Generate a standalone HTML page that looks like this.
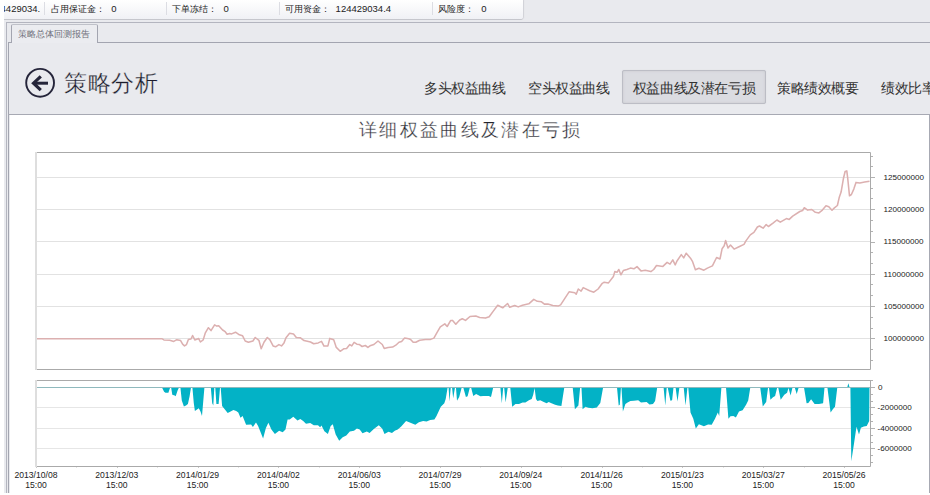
<!DOCTYPE html>
<html><head><meta charset="utf-8">
<style>
html,body{margin:0;padding:0;}
body{width:930px;height:495px;position:relative;overflow:hidden;background:#e9eaee;font-family:"Liberation Sans",sans-serif;}
.a{position:absolute;white-space:nowrap;}
.sb{font-size:9px;color:#222;top:3px;line-height:12px;}
.sbn{font-size:9.5px;color:#222;top:2.5px;line-height:12px;}
.sep{position:absolute;top:2px;width:1px;height:13px;background:#dcdde3;}
.nav{font-size:14px;color:#333;top:80px;line-height:17px;letter-spacing:-0.4px}
</style></head><body>
<div class="a" style="left:0;top:0;width:523px;height:19px;background:linear-gradient(#ffffff,#f0f1f5);box-shadow:0 1px 0 #c6c7cd, 1px 0 1px #d0d1d6;border-radius:0 0 2px 0"></div>
<div class="a sbn" style="left:-10px">124429034.</div>
<div class="sep" style="left:44px"></div>
<div class="a sb" style="left:50.6px">占用保证金：</div><div class="a sbn" style="left:111.3px">0</div>
<div class="sep" style="left:166px"></div>
<div class="a sb" style="left:172px">下单冻结：</div><div class="a sbn" style="left:223.6px">0</div>
<div class="sep" style="left:279px"></div>
<div class="a sb" style="left:284.5px">可用资金：</div><div class="a sbn" style="left:335.6px">124429034.4</div>
<div class="sep" style="left:432px"></div>
<div class="a sb" style="left:437.7px">风险度：</div><div class="a sbn" style="left:481.2px">0</div>
<div class="a" style="left:0;top:0;width:4px;height:495px;background:#fff"></div>
<!-- tab control -->
<div class="a" style="left:6px;top:22px;width:924px;height:1px;background:#b3b5bf"></div>
<div class="a" style="left:6px;top:22px;width:1px;height:471px;background:#b3b5bf"></div>
<div class="a" style="left:11px;top:24px;width:85px;height:18px;border:1px solid #a3a5b0;border-top-color:#bfc1c9;border-bottom:none;border-radius:2px 2px 0 0;background:#ebecf0"></div>
<div class="a" style="left:18px;top:28px;font-size:9px;color:#6e6f7a;line-height:12px">策略总体回测报告</div>
<div class="a" style="left:8px;top:42px;width:3px;height:1px;background:#a3a5b0"></div>
<div class="a" style="left:97px;top:42px;width:833px;height:1px;background:#a3a5b0"></div>
<div class="a" style="left:8px;top:42px;width:1px;height:451px;background:#a3a5b0"></div>
<!-- header -->
<svg class="a" style="left:0;top:0" width="930" height="495" viewBox="0 0 930 495">
<circle cx="40.1" cy="82.8" r="13.9" fill="none" stroke="#25253a" stroke-width="1.9"/>
<path d="M48,83.2 H34" fill="none" stroke="#25253a" stroke-width="3"/><path d="M40.8,76.3 L33.5,83.2 L40.8,90.1" fill="none" stroke="#25253a" stroke-width="3.2" stroke-linecap="butt" stroke-linejoin="miter" stroke-miterlimit="10"/>
</svg>
<div class="a" style="left:64px;top:69px;font-size:23.4px;color:#1c1c2c;line-height:28px;letter-spacing:0.65px;-webkit-text-stroke:0.3px #e9eaee">策略分析</div>
<div class="a nav" style="left:424px">多头权益曲线</div>
<div class="a nav" style="left:528px">空头权益曲线</div>
<div class="a" style="left:622px;top:69.5px;width:142px;height:32.5px;border:1px solid #bcbdc5;border-radius:2px;background:#dbdce1;box-shadow:inset 0 0 3px #c9cacf, 0 0 1px #d0d1d6"></div>
<div class="a nav" style="left:632.8px">权益曲线及潜在亏损</div>
<div class="a nav" style="left:777px">策略绩效概要</div>
<div class="a nav" style="left:881px">绩效比率</div>
<svg class="a" style="left:0;top:0" width="930" height="495" viewBox="0 0 930 495">
<rect x="10" y="115" width="919" height="378" fill="#fff"/>
<line x1="8" y1="114.5" x2="930" y2="114.5" stroke="#a7a9b3" stroke-width="1"/>
<line x1="929.5" y1="114" x2="929.5" y2="493" stroke="#a7a9b3" stroke-width="1"/>
<line x1="36" y1="177.5" x2="870" y2="177.5" stroke="#e2e2e2" stroke-width="1"/>
<line x1="36" y1="209.5" x2="870" y2="209.5" stroke="#e2e2e2" stroke-width="1"/>
<line x1="36" y1="241.5" x2="870" y2="241.5" stroke="#e2e2e2" stroke-width="1"/>
<line x1="36" y1="274.5" x2="870" y2="274.5" stroke="#e2e2e2" stroke-width="1"/>
<line x1="36" y1="306.5" x2="870" y2="306.5" stroke="#e2e2e2" stroke-width="1"/>
<line x1="36" y1="338.5" x2="870" y2="338.5" stroke="#e2e2e2" stroke-width="1"/>
<line x1="36" y1="407.5" x2="870" y2="407.5" stroke="#e6e6e6" stroke-width="1"/>
<line x1="36" y1="428.5" x2="870" y2="428.5" stroke="#e6e6e6" stroke-width="1"/>
<line x1="36" y1="448.5" x2="870" y2="448.5" stroke="#e6e6e6" stroke-width="1"/>
<line x1="870" y1="156.5" x2="873" y2="156.5" stroke="#b2b2b2" stroke-width="1"/>
<line x1="870" y1="166.5" x2="873" y2="166.5" stroke="#b2b2b2" stroke-width="1"/>
<line x1="870" y1="177.5" x2="875" y2="177.5" stroke="#b2b2b2" stroke-width="1"/>
<line x1="870" y1="188.5" x2="873" y2="188.5" stroke="#b2b2b2" stroke-width="1"/>
<line x1="870" y1="198.5" x2="873" y2="198.5" stroke="#b2b2b2" stroke-width="1"/>
<line x1="870" y1="209.5" x2="875" y2="209.5" stroke="#b2b2b2" stroke-width="1"/>
<line x1="870" y1="220.5" x2="873" y2="220.5" stroke="#b2b2b2" stroke-width="1"/>
<line x1="870" y1="231.5" x2="873" y2="231.5" stroke="#b2b2b2" stroke-width="1"/>
<line x1="870" y1="242.5" x2="875" y2="242.5" stroke="#b2b2b2" stroke-width="1"/>
<line x1="870" y1="252.5" x2="873" y2="252.5" stroke="#b2b2b2" stroke-width="1"/>
<line x1="870" y1="263.5" x2="873" y2="263.5" stroke="#b2b2b2" stroke-width="1"/>
<line x1="870" y1="274.5" x2="875" y2="274.5" stroke="#b2b2b2" stroke-width="1"/>
<line x1="870" y1="284.5" x2="873" y2="284.5" stroke="#b2b2b2" stroke-width="1"/>
<line x1="870" y1="295.5" x2="873" y2="295.5" stroke="#b2b2b2" stroke-width="1"/>
<line x1="870" y1="306.5" x2="875" y2="306.5" stroke="#b2b2b2" stroke-width="1"/>
<line x1="870" y1="317.5" x2="873" y2="317.5" stroke="#b2b2b2" stroke-width="1"/>
<line x1="870" y1="328.5" x2="873" y2="328.5" stroke="#b2b2b2" stroke-width="1"/>
<line x1="870" y1="338.5" x2="875" y2="338.5" stroke="#b2b2b2" stroke-width="1"/>
<line x1="870" y1="349.5" x2="873" y2="349.5" stroke="#b2b2b2" stroke-width="1"/>
<line x1="870" y1="360.5" x2="873" y2="360.5" stroke="#b2b2b2" stroke-width="1"/>
<line x1="870" y1="380.5" x2="873" y2="380.5" stroke="#b2b2b2" stroke-width="1"/>
<line x1="870" y1="387.5" x2="875" y2="387.5" stroke="#b2b2b2" stroke-width="1"/>
<line x1="870" y1="394.5" x2="873" y2="394.5" stroke="#b2b2b2" stroke-width="1"/>
<line x1="870" y1="401.5" x2="873" y2="401.5" stroke="#b2b2b2" stroke-width="1"/>
<line x1="870" y1="407.5" x2="875" y2="407.5" stroke="#b2b2b2" stroke-width="1"/>
<line x1="870" y1="414.5" x2="873" y2="414.5" stroke="#b2b2b2" stroke-width="1"/>
<line x1="870" y1="421.5" x2="873" y2="421.5" stroke="#b2b2b2" stroke-width="1"/>
<line x1="870" y1="428.5" x2="875" y2="428.5" stroke="#b2b2b2" stroke-width="1"/>
<line x1="870" y1="435.5" x2="873" y2="435.5" stroke="#b2b2b2" stroke-width="1"/>
<line x1="870" y1="442.5" x2="873" y2="442.5" stroke="#b2b2b2" stroke-width="1"/>
<line x1="870" y1="448.5" x2="875" y2="448.5" stroke="#b2b2b2" stroke-width="1"/>
<line x1="870" y1="455.5" x2="873" y2="455.5" stroke="#b2b2b2" stroke-width="1"/>
<line x1="870" y1="462.5" x2="873" y2="462.5" stroke="#b2b2b2" stroke-width="1"/>
<line x1="36.5" y1="466" x2="36.5" y2="468" stroke="#c8c8c8" stroke-width="1"/>
<line x1="76.5" y1="466" x2="76.5" y2="467.5" stroke="#c8c8c8" stroke-width="1"/>
<line x1="117.5" y1="466" x2="117.5" y2="468" stroke="#c8c8c8" stroke-width="1"/>
<line x1="157.5" y1="466" x2="157.5" y2="467.5" stroke="#c8c8c8" stroke-width="1"/>
<line x1="198.5" y1="466" x2="198.5" y2="468" stroke="#c8c8c8" stroke-width="1"/>
<line x1="238.5" y1="466" x2="238.5" y2="467.5" stroke="#c8c8c8" stroke-width="1"/>
<line x1="278.5" y1="466" x2="278.5" y2="468" stroke="#c8c8c8" stroke-width="1"/>
<line x1="319.5" y1="466" x2="319.5" y2="467.5" stroke="#c8c8c8" stroke-width="1"/>
<line x1="359.5" y1="466" x2="359.5" y2="468" stroke="#c8c8c8" stroke-width="1"/>
<line x1="400.5" y1="466" x2="400.5" y2="467.5" stroke="#c8c8c8" stroke-width="1"/>
<line x1="440.5" y1="466" x2="440.5" y2="468" stroke="#c8c8c8" stroke-width="1"/>
<line x1="480.5" y1="466" x2="480.5" y2="467.5" stroke="#c8c8c8" stroke-width="1"/>
<line x1="521.5" y1="466" x2="521.5" y2="468" stroke="#c8c8c8" stroke-width="1"/>
<line x1="561.5" y1="466" x2="561.5" y2="467.5" stroke="#c8c8c8" stroke-width="1"/>
<line x1="602.5" y1="466" x2="602.5" y2="468" stroke="#c8c8c8" stroke-width="1"/>
<line x1="642.5" y1="466" x2="642.5" y2="467.5" stroke="#c8c8c8" stroke-width="1"/>
<line x1="682.5" y1="466" x2="682.5" y2="468" stroke="#c8c8c8" stroke-width="1"/>
<line x1="723.5" y1="466" x2="723.5" y2="467.5" stroke="#c8c8c8" stroke-width="1"/>
<line x1="763.5" y1="466" x2="763.5" y2="468" stroke="#c8c8c8" stroke-width="1"/>
<line x1="804.5" y1="466" x2="804.5" y2="467.5" stroke="#c8c8c8" stroke-width="1"/>
<line x1="844.5" y1="466" x2="844.5" y2="468" stroke="#c8c8c8" stroke-width="1"/>
<path d="M36,387.4 L162.0,387.4 L164.1,391.7 L165.5,392.7 L168.4,392.7 L169.8,388.4 L170.5,387.4 L171.2,388.0 L172.3,394.8 L174.7,395.5 L175.7,396.2 L177.6,390.5 L179.0,387.4 L180.4,387.4 L181.8,400.4 L183.9,406.4 L186.0,405.4 L187.9,404.0 L189.6,396.2 L191.0,387.4 L192.4,387.4 L193.8,403.3 L194.9,411.0 L198.8,408.2 L200.6,411.7 L202.0,416.0 L204.4,387.7 L205.1,387.4 L210.8,387.4 L212.2,403.3 L213.3,405.4 L214.3,387.7 L215.3,388.0 L216.4,404.0 L218.6,404.0 L220.0,387.7 L220.7,387.4 L222.1,406.1 L227.7,412.9 L230.6,411.5 L233.4,410.1 L236.2,411.0 L238.3,412.5 L240.5,417.7 L242.6,416.0 L244.0,419.5 L246.1,424.8 L251.1,424.5 L252.9,427.0 L256.0,422.4 L258.1,425.9 L263.1,438.6 L265.9,428.0 L268.4,422.8 L271.4,429.4 L274.9,434.1 L279.1,430.8 L282.7,432.2 L285.5,429.4 L287.6,419.5 L289.7,419.5 L293.3,416.7 L297.5,420.5 L300.3,419.1 L303.2,420.9 L306.0,423.8 L310.2,423.1 L313.8,425.2 L318.0,425.2 L320.1,427.3 L321.5,425.6 L324.4,431.3 L327.9,434.1 L330.7,425.9 L332.8,424.2 L335.7,434.4 L339.2,440.7 L342.7,437.2 L346.3,435.5 L349.8,431.5 L354.0,430.8 L356.9,428.4 L359.7,429.4 L362.5,433.2 L366.8,431.5 L369.6,433.0 L373.8,429.0 L378.8,425.2 L382.3,428.7 L384.5,434.1 L388.5,431.8 L392.0,433.0 L394.8,430.8 L397.7,429.4 L401.2,426.6 L406.1,420.9 L410.4,422.8 L415.3,424.8 L418.9,422.3 L423.1,420.9 L426.6,421.4 L430.2,420.0 L434.4,419.5 L436.5,416.0 L440.8,406.8 L444.3,403.3 L445.7,399.0 L447.6,387.7 L448.6,387.7 L449.5,401.6 L450.7,388.0 L452.1,388.0 L453.2,398.3 L454.9,388.0 L456.0,388.0 L457.0,400.7 L459.2,396.9 L461.7,387.4 L463.4,388.0 L465.9,396.9 L467.6,396.2 L469.8,387.7 L471.2,388.0 L473.3,395.9 L476.1,394.1 L480.4,396.2 L483.2,395.9 L488.8,395.9 L491.0,396.9 L493.1,388.0 L494.5,387.4 L499.2,387.4 L500.4,388.0 L501.8,403.3 L503.2,388.0 L504.2,388.0 L505.6,402.6 L507.7,388.0 L509.1,387.4 L510.3,388.0 L512.2,406.8 L515.5,404.0 L519.0,404.0 L522.6,402.6 L525.4,402.6 L528.9,400.2 L531.7,399.0 L533.2,394.8 L534.6,388.0 L536.0,399.0 L537.4,401.1 L540.2,400.2 L543.8,401.9 L546.6,403.3 L548.7,401.9 L551.5,403.3 L555.1,404.7 L557.9,405.4 L561.4,406.1 L564.3,387.4 L572.7,387.4 L574.9,409.2 L578.4,405.4 L580.1,388.0 L581.5,388.0 L582.6,409.2 L585.5,406.8 L588.3,407.8 L592.5,408.2 L596.8,407.5 L600.3,403.0 L603.1,387.4 L617.0,387.4 L618.7,405.4 L619.8,404.7 L620.9,388.0 L621.5,388.0 L622.9,411.5 L625.4,404.0 L627.6,402.6 L630.4,401.1 L633.9,400.7 L638.2,400.2 L641.0,402.6 L646.6,402.1 L649.5,404.4 L653.0,404.0 L655.1,401.1 L657.2,387.4 L663.6,387.4 L665.3,405.4 L666.7,388.0 L667.8,388.0 L670.4,400.7 L672.1,400.2 L673.5,387.4 L675.6,387.4 L677.5,401.6 L679.4,387.4 L683.7,387.4 L685.5,405.4 L687.4,388.0 L688.3,388.0 L690.5,412.5 L693.3,418.8 L695.8,428.4 L698.9,424.2 L703.9,426.2 L708.1,424.5 L711.7,424.8 L715.0,418.8 L717.8,412.5 L719.2,416.0 L721.4,387.4 L726.0,387.4 L728.4,418.8 L730.5,416.3 L733.4,416.0 L735.9,417.4 L739.0,411.5 L742.6,410.3 L746.1,404.7 L748.2,400.4 L750.3,387.4 L760.2,387.4 L762.8,406.4 L765.2,403.3 L766.2,401.9 L768.0,388.0 L769.0,388.0 L770.4,399.7 L773.0,397.3 L775.1,395.9 L777.2,387.4 L778.3,388.0 L780.7,399.7 L784.3,394.8 L787.1,392.7 L788.5,388.0 L790.6,395.5 L792.5,387.4 L794.9,388.0 L796.7,394.1 L798.7,387.4 L804.0,387.4 L806.6,403.3 L808.3,403.0 L811.1,399.3 L814.6,404.0 L818.9,404.0 L823.1,403.3 L824.5,387.4 L827.4,387.4 L830.6,412.5 L833.0,409.0 L835.0,406.7 L837.3,387.4 L847.2,387.4 L848.4,383.3 L849.6,387.4 L850.4,387.4 L851.3,461.3 L854.2,442.2 L856.5,426.8 L859.0,434.5 L860.9,427.8 L863.8,426.4 L866.7,425.9 L869.2,421.1 L869.5,387.4 L870,387.4 Z" fill="#03b2c6" stroke="none"/>
<line x1="36" y1="387.5" x2="870" y2="387.5" stroke="#8fb9bd" stroke-width="1.2"/>
<path d="M36.0,338.7 L161.8,338.7 L163.9,339.9 L169.7,340.3 L173.8,341.4 L176.8,339.7 L180.6,340.6 L182.6,344.2 L184.5,345.9 L186.5,344.6 L188.4,339.4 L191.0,339.0 L192.6,335.5 L194.8,339.9 L198.7,338.6 L200.4,342.0 L203.2,339.9 L205.2,333.2 L208.4,327.7 L211.0,330.6 L214.6,324.8 L216.8,326.1 L218.7,325.7 L222.6,330.0 L225.2,331.7 L227.1,334.3 L229.7,333.5 L231.6,333.9 L235.5,332.2 L239.4,334.8 L242.6,335.8 L245.2,341.0 L248.4,342.3 L252.9,341.0 L255.2,337.5 L258.9,340.3 L261.2,348.7 L264.0,342.3 L267.3,337.5 L269.8,339.7 L273.1,345.9 L275.6,346.8 L278.9,344.6 L281.5,345.9 L284.0,342.9 L286.0,337.7 L289.6,333.2 L293.5,333.9 L296.3,337.5 L300.2,337.7 L304.0,340.6 L310.5,342.0 L313.7,343.8 L318.2,342.9 L321.5,341.4 L324.0,346.1 L327.9,345.9 L329.8,338.4 L333.7,339.7 L336.3,347.4 L340.2,351.3 L344.0,348.7 L346.6,348.5 L349.8,344.6 L351.8,345.9 L354.1,342.3 L356.9,344.2 L359.5,344.6 L362.1,346.5 L365.3,345.5 L367.9,347.4 L370.0,345.8 L373.9,344.5 L378.0,341.0 L382.3,344.5 L384.2,348.4 L388.1,347.5 L392.6,347.1 L395.8,345.2 L399.0,342.3 L401.6,341.5 L404.6,338.1 L408.7,338.7 L410.6,339.4 L413.2,342.3 L415.8,342.3 L419.7,340.3 L425.5,339.4 L430.6,339.4 L433.9,338.1 L437.1,332.3 L440.3,326.8 L444.8,323.9 L447.2,326.5 L450.6,320.6 L452.6,320.4 L455.8,324.3 L459.7,320.0 L462.3,318.7 L465.5,320.4 L470.0,316.5 L475.8,316.1 L479.7,317.4 L485.5,318.1 L489.2,316.8 L493.5,310.9 L497.7,305.2 L502.7,307.8 L507.6,303.5 L509.7,307.3 L514.7,305.5 L518.2,306.9 L522.5,305.2 L528.8,303.8 L533.8,299.3 L537.3,301.3 L541.5,301.8 L544.4,304.1 L547.9,304.1 L552.8,305.5 L558.5,305.9 L560.6,304.9 L569.1,291.8 L574.8,292.8 L576.2,294.2 L578.3,289.0 L581.1,291.1 L583.2,287.6 L589.6,290.8 L593.8,292.2 L598.1,289.0 L602.3,283.3 L604.2,282.2 L608.5,282.9 L613.4,276.5 L614.8,271.6 L617.0,272.3 L618.8,269.5 L620.9,274.8 L623.3,270.6 L626.9,269.5 L630.4,268.1 L633.9,268.8 L637.0,266.6 L641.0,270.9 L645.2,270.2 L650.9,271.6 L653.7,269.5 L656.5,265.5 L662.9,266.4 L667.1,262.4 L670.0,264.1 L672.8,259.9 L675.2,264.9 L677.0,261.0 L681.3,254.6 L683.7,257.9 L686.2,253.2 L690.5,258.2 L692.6,261.7 L695.4,269.8 L698.9,268.3 L703.9,270.2 L707.4,268.1 L712.4,265.9 L716.6,257.5 L720.0,259.0 L722.1,248.7 L724.2,245.8 L725.6,240.6 L728.0,248.0 L730.5,245.1 L734.1,249.1 L739.0,246.8 L744.0,244.4 L746.1,240.6 L750.3,234.9 L753.9,232.4 L757.4,227.0 L759.5,226.0 L763.1,228.2 L766.2,224.6 L768.4,226.5 L773.0,223.2 L776.9,220.0 L780.3,222.2 L786.4,218.6 L789.2,219.4 L792.7,216.1 L799.8,211.5 L802.6,210.5 L804.3,207.7 L807.6,210.1 L811.8,209.5 L815.4,212.3 L818.9,212.9 L822.4,210.1 L826.0,205.8 L828.8,206.7 L832.0,210.3 L834.4,207.9 L837.4,205.5 L839.2,197.6 L841.1,192.1 L843.5,178.2 L845.1,171.5 L846.8,170.9 L847.7,178.2 L849.5,195.8 L851.4,194.5 L853.8,189.1 L856.0,182.4 L859.8,183.0 L864.7,182.1 L869.5,181.2" fill="none" stroke="#dcb0b0" stroke-width="1.55" stroke-linejoin="round"/>
<path d="M36,152.5 H870.5 V369.5 H36" fill="none" stroke="#aaaaaa" stroke-width="1"/>
<rect x="35" y="152" width="2" height="218" fill="#dedede"/>
<path d="M36,380.5 H870.5 V466.5 H36" fill="none" stroke="#aaaaaa" stroke-width="1"/>
<rect x="35" y="380" width="2" height="87" fill="#dedede"/>
<g font-family="Liberation Sans, sans-serif" font-size="8.6" fill="#222"><text x="883.5" y="180.0" font-size="8.1">125000000</text><text x="883.5" y="212.0" font-size="8.1">120000000</text><text x="883.5" y="244.0" font-size="8.1">115000000</text><text x="883.5" y="277.0" font-size="8.1">110000000</text><text x="883.5" y="309.0" font-size="8.1">105000000</text><text x="883.5" y="341.0" font-size="8.1">100000000</text><text x="878" y="390.4" font-size="8.1">0</text><text x="877.5" y="410.0" font-size="8.1">-2000000</text><text x="877.5" y="431.0" font-size="8.1">-4000000</text><text x="877.5" y="451.0" font-size="8.1">-6000000</text><text x="36.0" y="478.3" text-anchor="middle">2013/10/08</text><text x="36.0" y="488" text-anchor="middle">15:00</text><text x="116.8" y="478.3" text-anchor="middle">2013/12/03</text><text x="116.8" y="488" text-anchor="middle">15:00</text><text x="197.6" y="478.3" text-anchor="middle">2014/01/29</text><text x="197.6" y="488" text-anchor="middle">15:00</text><text x="278.4" y="478.3" text-anchor="middle">2014/04/02</text><text x="278.4" y="488" text-anchor="middle">15:00</text><text x="359.2" y="478.3" text-anchor="middle">2014/06/03</text><text x="359.2" y="488" text-anchor="middle">15:00</text><text x="440.0" y="478.3" text-anchor="middle">2014/07/29</text><text x="440.0" y="488" text-anchor="middle">15:00</text><text x="520.8" y="478.3" text-anchor="middle">2014/09/24</text><text x="520.8" y="488" text-anchor="middle">15:00</text><text x="601.6" y="478.3" text-anchor="middle">2014/11/26</text><text x="601.6" y="488" text-anchor="middle">15:00</text><text x="682.4" y="478.3" text-anchor="middle">2015/01/23</text><text x="682.4" y="488" text-anchor="middle">15:00</text><text x="763.2" y="478.3" text-anchor="middle">2015/03/27</text><text x="763.2" y="488" text-anchor="middle">15:00</text><text x="844.0" y="478.3" text-anchor="middle">2015/05/26</text><text x="844.0" y="488" text-anchor="middle">15:00</text></g>
</svg>
<div class="a" style="left:359px;top:119.5px;font-size:18px;color:#24242c;line-height:20px;letter-spacing:2.35px;-webkit-text-stroke:0.3px #fff">详细权益曲线及潜在亏损</div>
<div class="a" style="left:0;top:493px;width:930px;height:2px;background:#fff"></div>
</body></html>
